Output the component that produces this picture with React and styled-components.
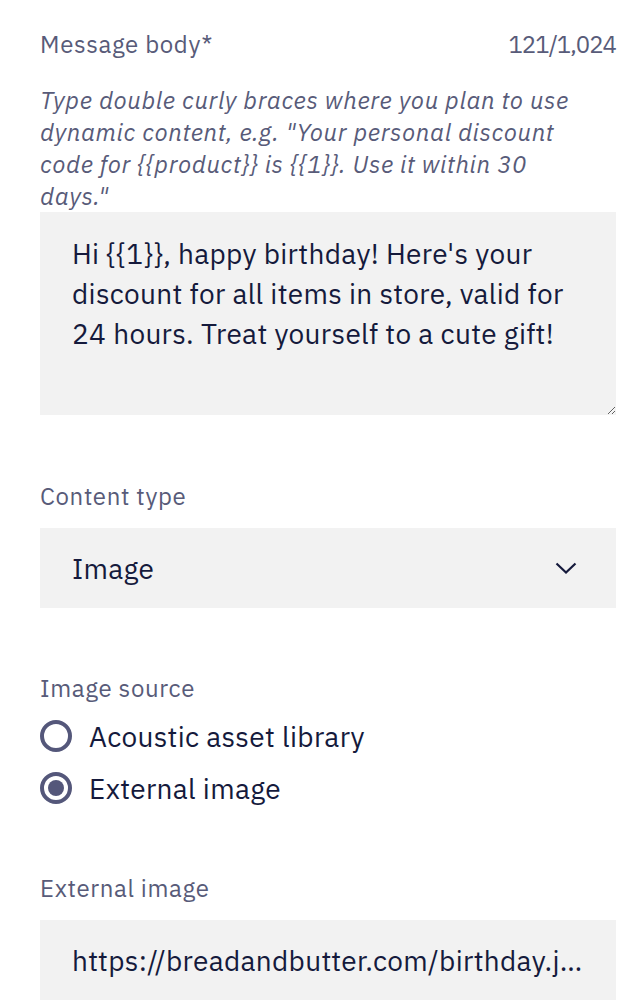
import React, { useState } from 'react';
import styled, { createGlobalStyle } from 'styled-components';

const GlobalStyle = createGlobalStyle`
  body {
    margin: 0;
    background: #ffffff;
    font-family: 'IBM Plex Sans', Roboto, 'Helvetica Neue', sans-serif;
  }
`;

const Form = styled.div`
  display: flex;
  flex-direction: column;
  width: 576px;
  padding: 28px 22px 0 40px;
`;

const Field = styled.div`
  display: flex;
  flex-direction: column;
  margin-top: ${props => props.spacing || 0}px;
`;

const LabelRow = styled.div`
  display: flex;
  justify-content: space-between;
  align-items: center;
`;

const Label = styled.label`
  font-size: 24px;
  line-height: 32px;
  letter-spacing: 0.64px;
  color: #585b79;
`;

const Counter = styled.span`
  font-size: 24px;
  line-height: 32px;
  letter-spacing: -1px;
  color: #585b79;
`;

const Helper = styled.div`
  max-width: 560px;
  margin-top: 24px;
  font-size: 24px;
  line-height: 32px;
  letter-spacing: 0.64px;
  font-style: italic;
  color: #585b79;
`;

const TextArea = styled.textarea`
  box-sizing: border-box;
  width: 100%;
  height: 203px;
  margin: ${props => (props.attached ? '0' : '16px 0 0')};
  padding: 22px 32px;
  border: none;
  outline: none;
  background: #f2f2f2;
  font-family: inherit;
  font-size: 28px;
  line-height: 40px;
  letter-spacing: 0.32px;
  color: #151a3c;
  resize: vertical;
`;

const SelectBox = styled.div`
  box-sizing: border-box;
  display: flex;
  align-items: center;
  justify-content: space-between;
  height: 80px;
  margin-top: 16px;
  padding: 0 39px 0 32px;
  background: #f2f2f2;
  font-size: 28px;
  letter-spacing: 0.32px;
  color: #151a3c;
  cursor: pointer;
`;

const RadioGroup = styled.div`
  display: flex;
  flex-direction: column;
  gap: 12px;
  margin-top: 12px;
`;

const RadioRow = styled.label`
  display: flex;
  align-items: center;
  gap: 17px;
  height: 40px;
  font-size: 28px;
  letter-spacing: 0.32px;
  color: #151a3c;
  cursor: pointer;
`;

const RadioCircle = styled.span`
  box-sizing: border-box;
  display: flex;
  align-items: center;
  justify-content: center;
  width: 32px;
  height: 32px;
  border: 4px solid #54577a;
  border-radius: 50%;

  &::after {
    content: '';
    width: 16px;
    height: 16px;
    border-radius: 50%;
    background: #54577a;
    display: ${props => (props.checked ? 'block' : 'none')};
  }
`;

const TextInput = styled.input`
  box-sizing: border-box;
  width: 100%;
  height: 80px;
  margin-top: 16px;
  padding: 0 32px;
  border: none;
  outline: none;
  background: #f2f2f2;
  font-family: inherit;
  font-size: 28px;
  letter-spacing: 0.32px;
  color: #151a3c;
  text-overflow: ellipsis;
`;

const Chevron = () => (
  <svg width="22" height="12" viewBox="0 0 22 12" fill="none">
    <path d="M1.5 1.5 L11 10.5 L20.5 1.5" stroke="#151a3c" strokeWidth="2.2" />
  </svg>
);

const message =
  "Hi {{1}}, happy birthday! Here's your discount for all items in store, valid for 24 hours. Treat yourself to a cute gift!";

const App = () => {
  const [body, setBody] = useState(message);
  const [source, setSource] = useState('external');

  return (
    <>
      <GlobalStyle />
      <Form>
        <Field>
          <LabelRow>
            <Label>Message body*</Label>
            <Counter>{body.length}/1,024</Counter>
          </LabelRow>
          <Helper>
            Type double curly braces where you plan to use dynamic content, e.g. "Your personal
            discount code for {'{{product}}'} is {'{{1}}'}. Use it within 30 days."
          </Helper>
          <TextArea attached value={body} onChange={e => setBody(e.target.value)} rows={4} />
        </Field>

        <Field spacing={65}>
          <Label>Content type</Label>
          <SelectBox>
            <span>Image</span>
            <Chevron />
          </SelectBox>
        </Field>

        <Field spacing={64}>
          <Label>Image source</Label>
          <RadioGroup>
            <RadioRow onClick={() => setSource('library')}>
              <RadioCircle checked={source === 'library'} />
              Acoustic asset library
            </RadioRow>
            <RadioRow onClick={() => setSource('external')}>
              <RadioCircle checked={source === 'external'} />
              External image
            </RadioRow>
          </RadioGroup>
        </Field>

        <Field spacing={64}>
          <Label>External image</Label>
          <TextInput readOnly value="https://breadandbutter.com/birthday.jpg?size=large" />
        </Field>
      </Form>
    </>
  );
};

export default App;
